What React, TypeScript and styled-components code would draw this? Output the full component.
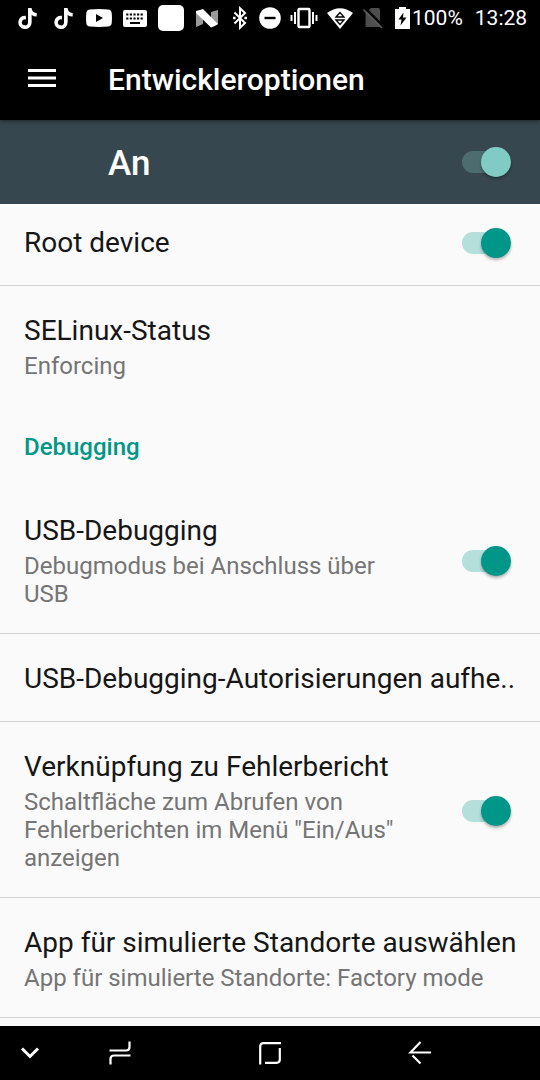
import React from 'react';
import styled, { createGlobalStyle, css } from 'styled-components';
import { FaTiktok } from 'react-icons/fa6';

const GlobalStyle = createGlobalStyle`
  * { box-sizing: border-box; }
  html, body { margin: 0; padding: 0; background: #fafafa; }
  body { font-family: Roboto, "Liberation Sans", sans-serif; }
  h1, h2, p, ul { margin: 0; padding: 0; font-weight: 400; }
  svg { display: block; }
`;

const Screen = styled.div`
  display: flex;
  flex-direction: column;
  height: 100vh;
  color: #161616;
  background: #fafafa;
`;

const StatusBar = styled.div`
  display: flex;
  flex: none;
  align-items: center;
  justify-content: space-between;
  height: 36px;
  padding: 0 13px 0 9px;
  color: #fff;
  background: #000;
`;

const IconGroup = styled.div`
  display: flex;
  align-items: center;
`;

const Cell = styled.span<{ $width: number }>`
  display: flex;
  flex: none;
  align-items: center;
  justify-content: center;
  width: ${({ $width }) => $width}px;
  height: 36px;
`;

const StatusText = styled.span`
  margin-left: 12px;
  font-size: 21px;
  line-height: 36px;
  white-space: nowrap;
`;

const BatteryText = styled(StatusText)`
  margin-left: 0;
`;

const Toolbar = styled.header`
  position: relative;
  display: flex;
  flex: none;
  align-items: center;
  height: 84px;
  padding-left: 24px;
  gap: 48px;
  color: #fff;
  background: #000;
  box-shadow: 0 1px 5px rgba(0, 0, 0, 0.5);
`;

const IconButton = styled.button`
  display: flex;
  align-items: center;
  justify-content: center;
  min-width: 36px;
  height: 54px;
  padding: 0;
  border: 0;
  color: inherit;
  background: none;
`;

const ToolbarTitle = styled.h1`
  padding-top: 4px;
  font-size: 30px;
  font-weight: 500;
  line-height: 36px;
`;

const MasterBar = styled.div`
  display: flex;
  flex: none;
  align-items: center;
  justify-content: space-between;
  height: 84px;
  padding: 0 28px 0 108px;
  color: #fff;
  background: #37474f;
`;

const MasterLabel = styled.label`
  padding-top: 4px;
  font-size: 35px;
  font-weight: 500;
  line-height: 42px;
`;

const Switch = styled.input.attrs({ type: 'checkbox', role: 'switch' })<{ $muted?: boolean }>`
  position: relative;
  flex: none;
  appearance: none;
  width: 50px;
  height: 30px;
  margin: 0;

  &::before {
    content: '';
    position: absolute;
    top: 4px;
    left: 0;
    width: 42px;
    height: 22px;
    border-radius: 11px;
    background: ${({ $muted }) => ($muted ? '#4c6c70' : '#b5dfda')};
  }

  &::after {
    content: '';
    position: absolute;
    top: 0;
    left: 0;
    width: 30px;
    height: 30px;
    border-radius: 50%;
    background: ${({ $muted }) => ($muted ? '#80cbc4' : '#009688')};
    box-shadow: 0 2px 3px rgba(0, 0, 0, 0.3);
  }

  &:checked::after {
    left: 19px;
  }

  &:not(:checked)::before {
    background: #b9b9b9;
  }

  &:not(:checked)::after {
    background: #f1f1f1;
  }
`;

const Viewport = styled.main`
  flex: 1;
  min-height: 0;
  overflow: hidden;
`;

/* The list rests slightly scrolled under the master switch bar. */
const List = styled.ul`
  margin-top: -6px;
  list-style: none;
`;

const Row = styled.li<{ $divided: boolean }>`
  display: flex;
  align-items: center;
  justify-content: space-between;
  gap: 42px;
  padding: 28px 28px 25px 24px;
  ${({ $divided }) =>
    $divided &&
    css`
      border-bottom: 1px solid #d2d2d2;
    `}
`;

const RowText = styled.div`
  min-width: 0;
`;

const RowTitle = styled.label`
  display: block;
  font-size: 28px;
  line-height: 34px;
  white-space: nowrap;
`;

const Summary = styled.p`
  padding-top: 4px;
  color: #757575;
  font-size: 24px;
  line-height: 28px;
`;

const Category = styled.li`
  padding: 28px 24px 24px;
  color: #009688;
`;

const CategoryTitle = styled.h2`
  font-size: 24px;
  font-weight: 500;
  line-height: 29px;
`;

const NavBar = styled.nav`
  display: grid;
  flex: none;
  grid-template-columns: 1fr 2fr 3fr 2fr 1fr;
  height: 54px;
  color: #fff;
  background: #000;
`;

type RowProps = {
  id: string;
  title: string;
  summary?: string;
  toggle?: boolean;
  divided?: boolean;
};

function Preference({ id, title, summary, toggle = false, divided = true }: RowProps) {
  return (
    <Row $divided={divided}>
      <RowText>
        <RowTitle as={toggle ? 'label' : 'div'} {...(toggle ? { htmlFor: id } : {})}>
          {title}
        </RowTitle>
        {summary && <Summary>{summary}</Summary>}
      </RowText>
      {toggle && <Switch id={id} defaultChecked />}
    </Row>
  );
}

const YouTubeIcon = () => (
  <svg width="26" height="18" viewBox="0 0 26 18">
    <path fill="#fff" fillRule="evenodd" d="M4 .4Q13-.4 22 .4 25.400.8 25.700 4 26.200 9 25.700 14 25.400 17.200 22 17.600 13 18.400 4 17.600.600 17.200.300 14-.2 9 .3 4 .6.8 4 .4ZM10 5v8l7-4Z" />
  </svg>
);

const KeyboardIcon = () => (
  <svg width="24" height="17" viewBox="0 0 24 17">
    <rect width="24" height="17" rx="2" fill="#fff" />
    <path stroke="#000" strokeWidth="2.200" strokeDasharray="2.200 1.400" d="M3.200 4.500H21M3.200 8.500H21" />
    <path stroke="#000" strokeWidth="2" d="M7 13H17" />
  </svg>
);

const NougatIcon = () => (
  <svg width="22" height="19" viewBox="0 0 22 19">
    <path fill="#999" d="M0 4 7 1V15L0 18ZM15 3 22 1V15L15 18Z" />
    <path fill="#fff" d="M0 2Q4 1 7 0L22 15Q18 18 15 18.500L0 4Z" />
  </svg>
);

const BluetoothIcon = () => (
  <svg width="14" height="24" viewBox="0 0 14 24" fill="none" stroke="#fff" strokeWidth="2">
    <path d="M1.500 6.500 12 17 7 21.800V2.200L12 7 1.500 17.500" />
    <path strokeWidth="2.600" d="M0 12H2.600M11.400 12H14" />
  </svg>
);

const DoNotDisturbIcon = () => (
  <svg width="22" height="22" viewBox="0 0 22 22">
    <circle cx="11" cy="11" r="10.800" fill="#fff" />
    <path stroke="#000" strokeWidth="2.400" d="M5.500 11h11" />
  </svg>
);

const VibrateIcon = () => (
  <svg width="28" height="22" viewBox="0 0 28 22" fill="none" stroke="#fff" strokeWidth="2">
    <rect x="8.500" y="2" width="11" height="18" rx="1" strokeWidth="2.400" />
    <path d="M5 5v12M1.500 8v6M23 5v12M26.500 8v6" />
  </svg>
);

const WifiIcon = () => (
  <svg width="26" height="21" viewBox="0 0 26 21">
    <path fill="#fff" d="M0 5Q13-4.500 26 5L13 21Z" />
    <path fill="#fff" stroke="#000" strokeWidth="1.300" d="M9 9 13 4.500 17 9ZM9 12 13 16.500 17 12Z" />
  </svg>
);

const NoSimIcon = () => (
  <svg width="20" height="22" viewBox="0 0 20 22">
    <path fill="#4d4d4d" d="M8 1H15.500Q17 1 17 2.500V20H4Q2.500 20 2.500 18.500V6Z" />
    <path stroke="#000" strokeWidth="2.500" d="M2 1 20 19" />
    <path stroke="#5c5c5c" strokeWidth="1.600" d="M.5 2.500 19 21" />
  </svg>
);

const BatteryIcon = () => (
  <svg width="19" height="22" viewBox="-4 0 19 22">
    <path fill="#fff" d="M4 0h7v2h4v20H0V2h4Z" />
    <path fill="#000" d="M8.500 5.500 3.500 12.500H6.500L5.500 18.500 11.500 10.500H8Z" />
  </svg>
);

const MenuIcon = () => (
  <svg width="28" height="18" viewBox="0 0 28 18" stroke="#fff" strokeWidth="3">
    <path d="M0 1.500h28M0 9h28M0 16.500h28" />
  </svg>
);

const lineIcon = { width: 24, height: 24, viewBox: '0 0 24 24', fill: 'none', stroke: '#fff', strokeWidth: 2.2 };

const HideIcon = () => (
  <svg {...lineIcon} strokeWidth={3}>
    <path d="M4 7.500 12 15.500 20 7.500" />
  </svg>
);

const RecentsIcon = () => (
  <svg {...lineIcon}>
    <path d="M1.500 9.500H18Q21.500 9.500 21.500 6V.5M22.500 14.500H6Q2.500 14.500 2.500 18V23.500" />
  </svg>
);

const HomeIcon = () => (
  <svg {...lineIcon}>
    <path d="M2.200 23.500V5.500Q2.200 2.200 5.500 2.200H23M21.800 7V18.500Q21.800 21.800 18.500 21.800H7" />
  </svg>
);

const BackIcon = () => (
  <svg {...lineIcon}>
    <path d="M12.500 1 2.500 11.500H23M4.500 14.500 12.500 22.500" />
  </svg>
);

export default function App() {
  return (
    <Screen>
      <GlobalStyle />
      <StatusBar>
        <IconGroup>
          <Cell $width={36}><FaTiktok size={21} /></Cell>
          <Cell $width={36}><FaTiktok size={21} /></Cell>
          <Cell $width={36}><YouTubeIcon /></Cell>
          <Cell $width={36}><KeyboardIcon /></Cell>
          <Cell $width={36}>
            <svg width="26" height="26" viewBox="0 0 26 26"><rect width="26" height="26" rx="5" fill="#fff" /></svg>
          </Cell>
          <Cell $width={36}><NougatIcon /></Cell>
        </IconGroup>
        <IconGroup>
          <Cell $width={30}><BluetoothIcon /></Cell>
          <Cell $width={30}><DoNotDisturbIcon /></Cell>
          <Cell $width={38}><VibrateIcon /></Cell>
          <Cell $width={34}><WifiIcon /></Cell>
          <Cell $width={31}><NoSimIcon /></Cell>
          <Cell $width={24}><BatteryIcon /></Cell>
          <BatteryText>100%</BatteryText>
          <StatusText>13:28</StatusText>
        </IconGroup>
      </StatusBar>
      <Toolbar>
        <IconButton aria-label="Menü"><MenuIcon /></IconButton>
        <ToolbarTitle>Entwickleroptionen</ToolbarTitle>
      </Toolbar>
      <MasterBar>
        <MasterLabel htmlFor="master">An</MasterLabel>
        <Switch id="master" $muted defaultChecked />
      </MasterBar>
      <Viewport>
        <List>
          <Preference id="root-device" title="Root device" toggle />
          <Preference id="selinux" title="SELinux-Status" summary="Enforcing" divided={false} />
          <Category>
            <CategoryTitle>Debugging</CategoryTitle>
          </Category>
          <Preference id="usb" title="USB-Debugging" summary="Debugmodus bei Anschluss über USB" toggle />
          <Preference id="revoke" title="USB-Debugging-Autorisierungen aufhe.." />
          <Preference
            id="bugreport"
            title="Verknüpfung zu Fehlerbericht"
            summary={'Schaltfläche zum Abrufen von Fehlerberichten im Menü "Ein/Aus" anzeigen'}
            toggle
          />
          <Preference
            id="mock"
            title="App für simulierte Standorte auswählen"
            summary="App für simulierte Standorte: Factory mode"
          />
        </List>
      </Viewport>
      <NavBar>
        <IconButton aria-label="Leiste ausblenden"><HideIcon /></IconButton>
        <IconButton aria-label="Letzte Apps"><RecentsIcon /></IconButton>
        <IconButton aria-label="Startseite"><HomeIcon /></IconButton>
        <IconButton aria-label="Zurück"><BackIcon /></IconButton>
      </NavBar>
    </Screen>
  );
}
